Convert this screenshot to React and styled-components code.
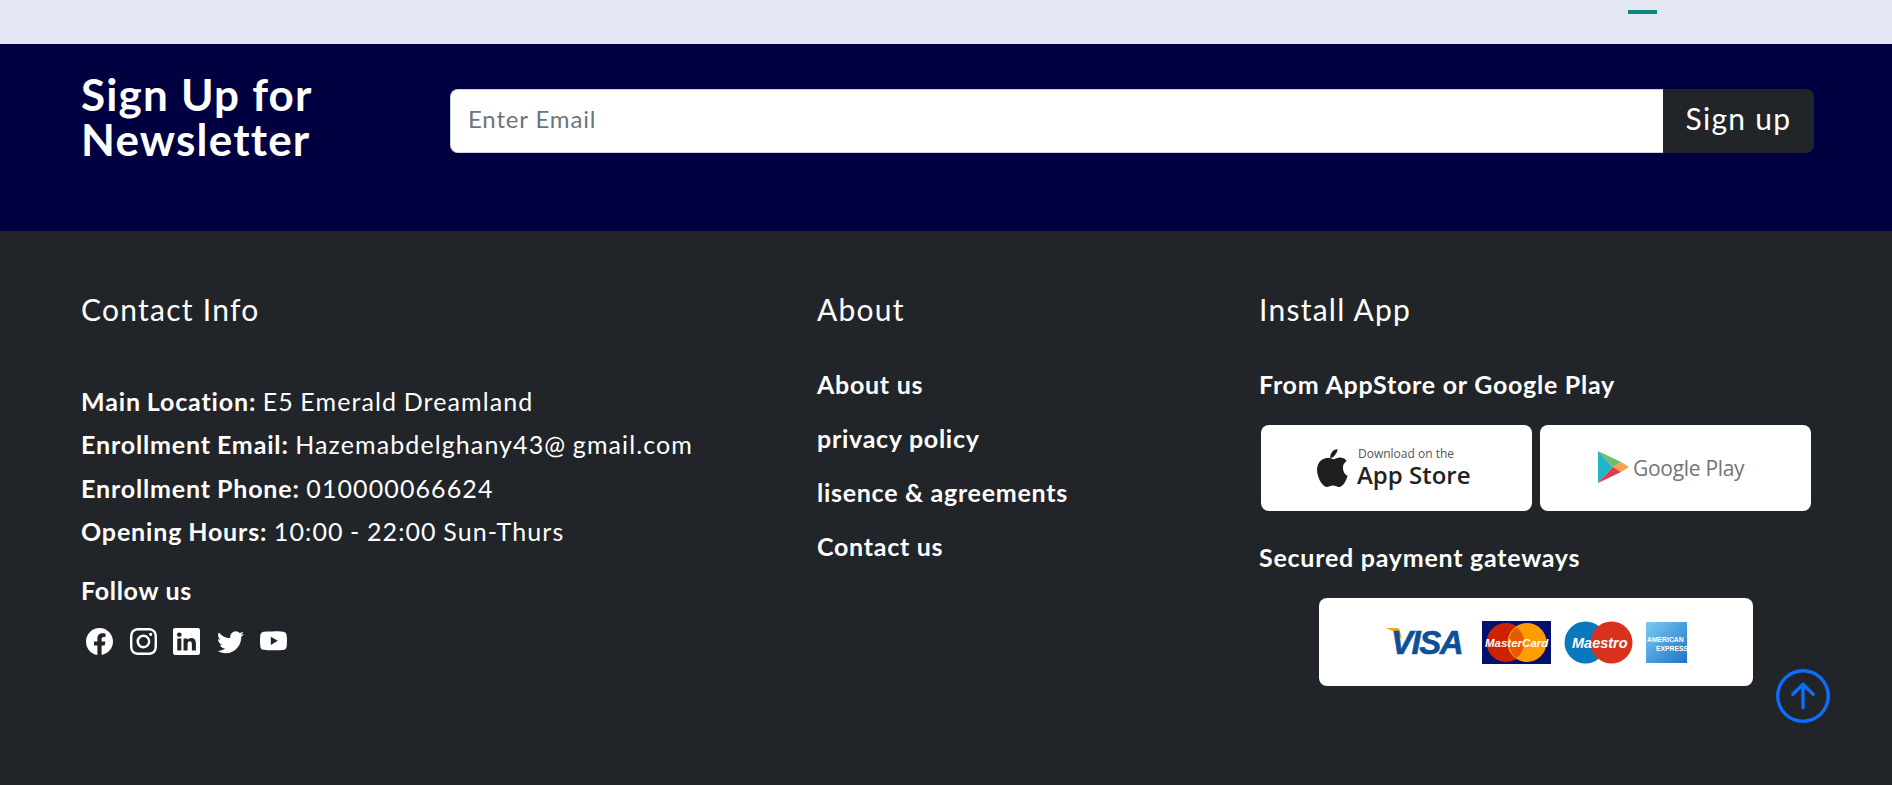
import React from "react";
import styled, { createGlobalStyle } from "styled-components";
import { BsFacebook, BsInstagram, BsLinkedin, BsTwitter, BsYoutube, BsArrowUpCircle } from "react-icons/bs";

const Global = createGlobalStyle`
  html, body { margin: 0; padding: 0; background: #212529; }
  body { font-family: Lato, "Open Sans", sans-serif; color: #fff; }
  * { box-sizing: border-box; }
`;
const Page = styled.div`position: relative; width: 1892px; height: 785px; overflow: hidden; display: flex; flex-direction: column;`;
const TopStrip = styled.div`height: 44px; flex: none; background: #e2e7f3; display: flex; justify-content: flex-end; padding: 10px 235px 0 0;`;
const Indicator = styled.div`width: 29px; height: 4px; background: #0a877a;`;
const Newsletter = styled.section`height: 187px; flex: none; background: #000040; padding: 28px 78px 0 81px; display: flex; align-items: flex-start;`;
const NewsTitle = styled.h2`margin: 0; width: 369px; flex: none; font-size: 44px; line-height: 45px; font-weight: 700; letter-spacing: 1.2px;`;
const EmailForm = styled.form`flex: 1; display: flex; height: 64px; margin-top: 17px;`;
const EmailInput = styled.input`
  flex: 1; min-width: 0; border: 1px solid #ced4da; border-right: 0; border-radius: 8px 0 0 8px; padding: 0 17px 5px; background: #fff;
  font: 400 24px Lato, sans-serif; letter-spacing: .85px; color: #212529; outline: none;
  &::placeholder { color: #6c757d; opacity: 1; }
`;
const SignButton = styled.button`width: 151px; border: 0; border-radius: 0 8px 8px 0; background: #212529; color: #fff; font: 400 30px Lato, sans-serif; letter-spacing: 1.3px; padding: 0 0 6px;`;
const Footer = styled.footer`flex: 1; background: #212529; padding: 56px 79px 0 81px; display: grid; grid-template-columns: 736px 442px 1fr;`;
const Column = styled.div`display: flex; flex-direction: column; align-items: flex-start;`;
const Heading = styled.h3`margin: 0; font-size: 30px; line-height: 44px; font-weight: 400; letter-spacing: 1.25px;`;
const InfoList = styled.div`margin-top: 49px; display: flex; flex-direction: column;`;
const InfoLine = styled.div`font-size: 25px; line-height: 43.4px; letter-spacing: 1.1px; word-spacing: -1px; white-space: nowrap; b { font-weight: 700; letter-spacing: .85px; }`;
const FollowTitle = styled.div`margin-top: 20px; font-size: 25px; line-height: 32px; font-weight: 700; letter-spacing: .7px;`;
const Socials = styled.div`margin: 22px 0 0 5px; display: flex; gap: 16.5px; svg { display: block; }`;
const LinkList = styled.nav`margin-top: 37px; display: flex; flex-direction: column; gap: 22px;`;
const FooterLink = styled.a`font-size: 25px; line-height: 32px; font-weight: 700; letter-spacing: .72px; color: #fff; white-space: nowrap;`;
const SubTitle = styled.div`font-size: 25px; line-height: 32px; font-weight: 700; letter-spacing: .75px; white-space: nowrap; margin-top: ${p => p.$gap}px;`;
const StoreRow = styled.div`display: flex; gap: 8px; margin: 25px 0 0 2px;`;
const Card = styled.div`background: #fff; border-radius: 8px; display: flex; align-items: center; justify-content: center;`;
const StoreCard = styled(Card)`width: 271px; height: 86px; padding-right: 8px;`;
const PayCard = styled(Card)`width: 434px; height: 88px; gap: 13px; margin: 25px 0 0 60px; svg:first-child { margin-right: 2px; }`;
const ToTop = styled.a`position: absolute; right: 62px; bottom: 62px; color: #0d6efd; display: block; line-height: 0;`;

const AppleStore = () => (
  <svg width="158" height="44" viewBox="0 0 158 44">
    <path fill="#1f1f1f" d="M20.6 9.6c1.6-2 2.8-3.5 2.9-6.5-2.7.3-5 1.9-6.1 4-.8 1.500-1.300 3.200-1.200 5 2 .1 3.300-1 4.400-2.500zM29 21.500c0-3.600 2.700-5.700 3.700-6.500-2-2.800-5.100-3.300-6.200-3.400-2.700-.2-5.100 1.600-6.500 1.600-1.500 0-3.500-1.500-5.800-1.500C10 11.700 3 14.800 3 24c0 7 5.400 17 9.800 17 2 0 3.600-1.500 6.200-1.500s3.900 1.400 6.100 1.400c3.900 0 7.700-7.100 8.400-11.200-3-1.300-4.500-4.300-4.500-7.700z"/>
    <text x="44" y="12" fontFamily="'Open Sans', sans-serif" fontSize="12" fill="#555">Download on the</text>
    <text x="43" y="38" fontFamily="'Open Sans', sans-serif" fontSize="24" fontWeight="600" fill="#222">App Store</text>
  </svg>
);
const GooglePlay = () => (
  <svg width="152" height="36" viewBox="0 0 152 36">
    <path fill="#23b4c7" d="M2 1v32l15-16z"/>
    <path fill="#6fbd6b" d="M2 1l15 16 8-5z"/>
    <path fill="#f5a04c" d="M25 12l-8 5 8 5 8-5z"/>
    <path fill="#d9404a" d="M2 33l23-11-8-5z"/>
    <text x="37" y="26" fontFamily="'Open Sans', sans-serif" fontSize="21" letterSpacing="-.3" fill="#757575">Google Play</text>
  </svg>
);
const Visa = () => (
  <svg width="82" height="30" viewBox="0 0 82 30">
    <path fill="#f4a81f" d="M0 1h12c1.500 0 2.500 1 3 3l2 9C14 7 7 3 0 1z"/>
    <text x="6" y="27" fontFamily="'Liberation Sans', sans-serif" fontStyle="italic" fontWeight="700" fontSize="33" letterSpacing="-1.500" fill="#0f4f95" stroke="#0f4f95" strokeWidth=".6">VISA</text>
  </svg>
);
const MasterCard = () => (
  <svg width="69" height="43" viewBox="0 0 69 43">
    <rect width="69" height="43" fill="#04106f"/>
    <circle cx="24" cy="21.500" r="19.500" fill="#cc2200"/>
    <circle cx="45" cy="21.500" r="19.500" fill="#ff9c00"/>
    <path fill="#e85a00" d="M34.500 6a19.500 19.500 0 0 1 0 31 19.500 19.500 0 0 1 0-31z"/>
    <text x="3" y="26" fontFamily="'Liberation Sans', sans-serif" fontStyle="italic" fontWeight="700" fontSize="11.500" fill="#fff">MasterCard</text>
  </svg>
);
const Maestro = () => (
  <svg width="69" height="43" viewBox="0 0 69 43">
    <circle cx="21.500" cy="21.500" r="21" fill="#0a78bd"/>
    <circle cx="47.500" cy="21.500" r="21" fill="#d9321c"/>
    <text x="8" y="27" fontFamily="'Liberation Sans', sans-serif" fontStyle="italic" fontWeight="700" fontSize="14.500" fill="#fff">Maestro</text>
  </svg>
);
const Amex = () => (
  <svg width="41" height="41" viewBox="0 0 41 41">
    <defs><linearGradient id="amexg" x1="0" y1="0" x2="1" y2="1"><stop offset="0" stopColor="#7ccbf2"/><stop offset="1" stopColor="#1c74c8"/></linearGradient></defs>
    <rect width="41" height="41" fill="url(#amexg)"/>
    <text x="1" y="20" fontFamily="'Liberation Sans', sans-serif" fontWeight="700" fontSize="6.800" fill="#fff">AMERICAN</text>
    <text x="10" y="29" fontFamily="'Liberation Sans', sans-serif" fontWeight="700" fontSize="6.800" fill="#fff">EXPRESS</text>
  </svg>
);

export default function App() {
  return (
    <Page>
      <Global />
      <TopStrip><Indicator /></TopStrip>
      <Newsletter>
        <NewsTitle>Sign Up for<br />Newsletter</NewsTitle>
        <EmailForm onSubmit={e => e.preventDefault()}>
          <EmailInput placeholder="Enter Email" />
          <SignButton type="submit">Sign up</SignButton>
        </EmailForm>
      </Newsletter>
      <Footer>
        <Column>
          <Heading>Contact Info</Heading>
          <InfoList>
            <InfoLine><b>Main Location:</b> E5 Emerald Dreamland</InfoLine>
            <InfoLine><b>Enrollment Email:</b> Hazemabdelghany43@ gmail.com</InfoLine>
            <InfoLine><b>Enrollment Phone:</b> 010000066624</InfoLine>
            <InfoLine><b>Opening Hours:</b> 10:00 - 22:00 Sun-Thurs</InfoLine>
          </InfoList>
          <FollowTitle>Follow us</FollowTitle>
          <Socials>
            <BsFacebook size={27} /><BsInstagram size={27} /><BsLinkedin size={27} /><BsTwitter size={27} /><BsYoutube size={27} />
          </Socials>
        </Column>
        <Column>
          <Heading>About</Heading>
          <LinkList>
            <FooterLink>About us</FooterLink>
            <FooterLink>privacy policy</FooterLink>
            <FooterLink>lisence &amp; agreements</FooterLink>
            <FooterLink>Contact us</FooterLink>
          </LinkList>
        </Column>
        <Column>
          <Heading>Install App</Heading>
          <SubTitle $gap={37}>From AppStore or Google Play</SubTitle>
          <StoreRow>
            <StoreCard><AppleStore /></StoreCard>
            <StoreCard><GooglePlay /></StoreCard>
          </StoreRow>
          <SubTitle $gap={30}>Secured payment gateways</SubTitle>
          <PayCard><Visa /><MasterCard /><Maestro /><Amex /></PayCard>
        </Column>
      </Footer>
      <ToTop><BsArrowUpCircle size={54} /></ToTop>
    </Page>
  );
}
